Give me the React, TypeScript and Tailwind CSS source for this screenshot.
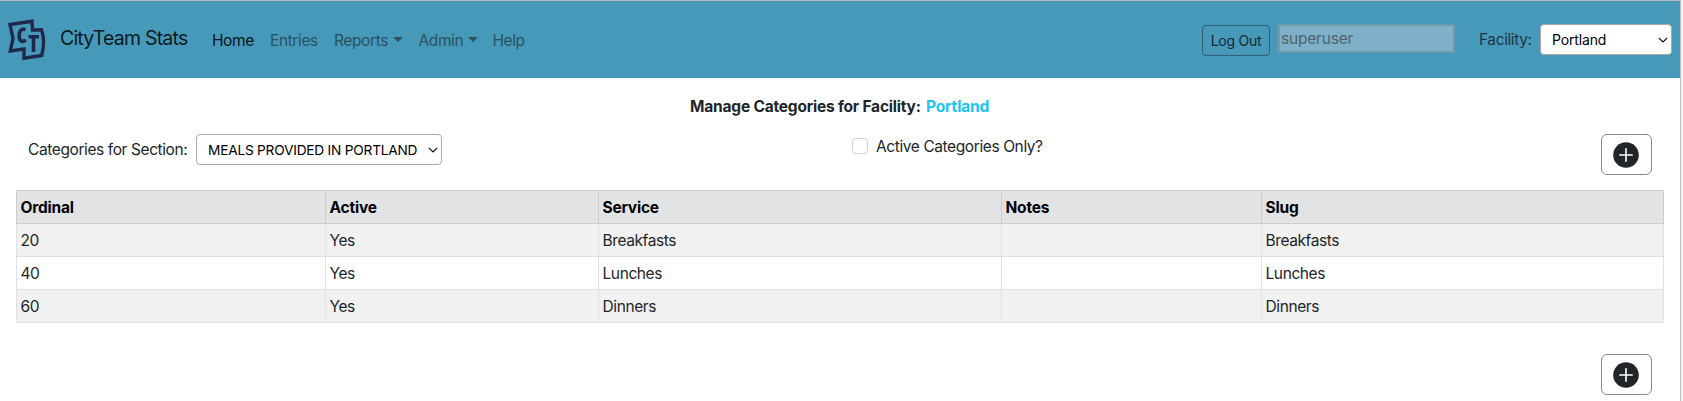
import React from "react";

const navItems = [
  { label: "Home", active: true, width: "w-[58px]" },
  { label: "Entries", width: "w-[64px]" },
  { label: "Reports", menu: true, width: "w-[84.5px]" },
  { label: "Admin", menu: true, width: "w-[74px]" },
  { label: "Help", width: "w-[40px]" },
];

const rows = [
  ["20", "Yes", "Breakfasts", "", "Breakfasts"],
  ["40", "Yes", "Lunches", "", "Lunches"],
  ["60", "Yes", "Dinners", "", "Dinners"],
];

function Logo() {
  return (
    <svg className="ml-2 mt-[18px] h-[43px] w-[38px] shrink-0" viewBox="0 0 38 43" fill="none" stroke="#1f2a4a">
      <path
        d="M2 5.5 L24 2.2 L24.5 11 L33.5 10.8 Q37.5 21 33.8 36.4 L16 39.3 L16 30 L2.3 31.9 L5 19.5 Z"
        strokeWidth="3.4"
      />
      <path d="M17.5 10.4 C12.2 9.2 10.8 13.2 11.2 17.7 C11.6 22.4 13.8 23.6 18 21" strokeWidth="3.6" />
      <path d="M20.5 17.8 H31 M25.5 17.8 V33" strokeWidth="3.6" />
    </svg>
  );
}

function Chevron() {
  return (
    <svg className="h-[6px] w-[10px]" viewBox="0 0 10 6" fill="none" stroke="currentColor" strokeWidth="1.1">
      <path d="M0.8 0.8 L5 4.9 L9.2 0.8" />
    </svg>
  );
}

function AddButton({ className }: { className: string }) {
  return (
    <button
      className={`flex h-[41px] w-[51px] items-center justify-center rounded-md border border-[#86898c] bg-white pr-px ${className}`}
      aria-label="Add category"
    >
      <svg className="h-[26px] w-[26px]" viewBox="0 0 26 26">
        <circle cx="13" cy="13" r="12.8" fill="#212529" />
        <path d="M13 6.8 V19.2 M6.8 13 H19.2" stroke="#fff" strokeWidth="1.6" strokeLinecap="round" />
      </svg>
    </button>
  );
}

export default function App() {
  return (
    <div className="flex h-[401px] w-[1683px] overflow-hidden bg-white font-['Inter',sans-serif] text-[15.5px] leading-6 tracking-[-0.4px] whitespace-nowrap text-[#212529]">
      <div className="w-[1680px] shrink-0">
        <nav className="flex h-[78px] items-start border-t border-[#b5b6c8] bg-[#4799ba]">
          <Logo />
          <span className="ml-[14px] mt-[22px] w-[152px] text-[19.5px] leading-[30px] tracking-[-0.8px] text-[#0b1a20]">
            CityTeam Stats
          </span>
          <div className="mt-[28px] flex">
            {navItems.map((item) => (
              <a
                key={item.label}
                className={`flex items-start ${item.width} ${item.active ? "text-[#07141a]" : "text-[#27525f]"}`}
              >
                {item.label}
                {item.menu && (
                  <span className="ml-[5px] mt-2 h-0 w-0 border-x-[5px] border-t-[5px] border-x-transparent border-t-[#27525f]" />
                )}
              </a>
            ))}
          </div>
          <button className="ml-auto mt-6 h-[31px] w-[68px] rounded border border-[#315f74] text-[14px] leading-5 tracking-[-0.25px] text-[#15282f]">
            Log Out
          </button>
          <div className="ml-2 mt-[23px] h-[29px] w-[177px] border-2 border-[#6f9aab] bg-[#7eb1c9] pl-px leading-[26px] text-[#50636c]">
            <span className="tracking-[-0.2px]">superuser</span>
          </div>
          <span className="ml-6 mt-[27px] w-[61px] text-[#21353e]">Facility:</span>
          <div className="mr-2 mt-[23px] flex h-[31px] w-[132px] items-center justify-between rounded border border-[#a7a9ab] bg-white pr-[3px] pl-[11px] text-[14px] text-black">
            <span className="tracking-[-0.15px]">Portland</span>
            <Chevron />
          </div>
        </nav>

        <h1 className="mt-[17px] flex pl-[690px] text-[15.5px] font-bold">
          <span className="w-[236px] tracking-[-0.2px]">Manage Categories for Facility:</span>
          <span className="tracking-[-0.15px] text-[#1cc5f0]">Portland</span>
        </h1>

        <div className="flex h-[71px] items-start">
          <span className="ml-7 mt-[19px] w-[168px]">Categories for Section:</span>
          <div className="mt-[15px] flex h-[31px] w-[246px] items-center justify-between rounded border border-[#a9abad] pr-[3px] pl-[11px] text-[13.7px] text-black">
            <span className="tracking-[-0.22px]">MEALS PROVIDED IN PORTLAND</span>
            <Chevron />
          </div>
          <span className="ml-[410px] mt-[19px] h-4 w-4 rounded-[4px] border border-[#d3d4d5]" />
          <span className="ml-2 mt-4">Active Categories Only?</span>
          <AddButton className="mr-7 ml-auto mt-[15px]" />
        </div>

        <table className="ml-4 w-[1648px] table-fixed border-collapse border border-[#dee2e6]">
          <colgroup>
            <col className="w-[309px]" />
            <col className="w-[273px]" />
            <col className="w-[403px]" />
            <col className="w-[260px]" />
            <col />
          </colgroup>
          <thead>
            <tr className="h-[33px] bg-[#e2e3e5] text-left text-black">
              {["Ordinal", "Active", "Service", "Notes", "Slug"].map((h) => (
                <th key={h} className="border border-[#cbccce] px-[3.5px] pt-[2px] pb-0 font-bold tracking-[-0.2px]">
                  {h}
                </th>
              ))}
            </tr>
          </thead>
          <tbody>
            {rows.map((row) => (
              <tr key={row[0]} className="h-[33px] odd:bg-[#f1f1f1]">
                {row.map((cell, i) => (
                  <td key={i} className="border border-[#dfe1e4] px-[3.5px] pt-[2px] pb-0">
                    {cell}
                  </td>
                ))}
              </tr>
            ))}
          </tbody>
        </table>

        <AddButton className="mr-7 ml-auto mt-[31px]" />
      </div>
      <div className="w-[3px] border-l border-[#bfbfc1] bg-[#f1f1f1]" />
    </div>
  );
}
